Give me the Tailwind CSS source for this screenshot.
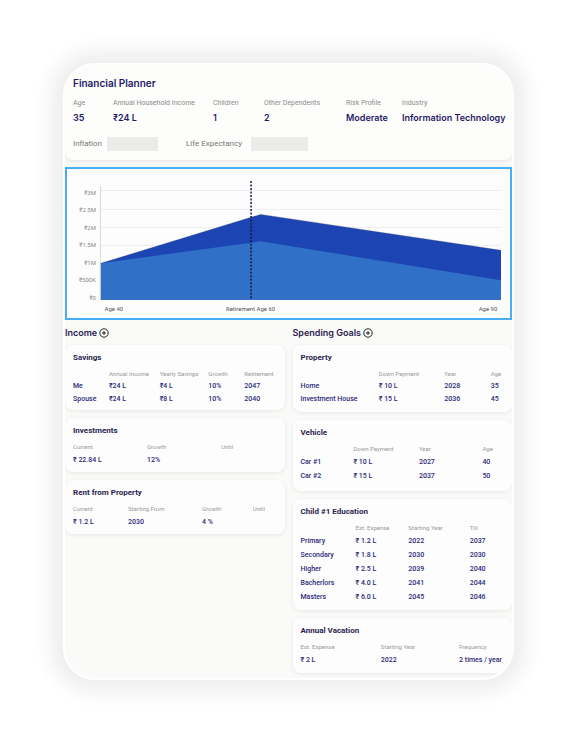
<!DOCTYPE html>
<html lang="en">
<head>
<meta charset="utf-8">
<meta name="viewport" content="width=device-width, initial-scale=1">
<title>Financial Planner</title>
<script src="https://cdn.jsdelivr.net/npm/@tailwindcss/browser@4"></script>
</head>
<body class="bg-white p-[63px] font-[Roboto,'Noto_Sans',sans-serif] text-[#2c2a78]">
<main class="overflow-hidden rounded-[32px] border-2 border-white bg-[#fafaf8] pb-[5px] shadow-[0_0_20px_12px_rgba(0,0,0,0.07)]">

  <header class="rounded-b-lg bg-[#fdfdfc] px-2 pt-[11px] pb-[9px] shadow-[0_1px_4px_rgba(0,0,0,0.1)]">
    <h1 class="font-[Inter,sans-serif] text-[10px] leading-[14px] font-semibold text-[#1f1a66]">Financial Planner</h1>
    <dl class="mt-[6px] grid grid-cols-[40fr_100fr_51fr_82fr_56fr_102fr] font-[Inter,'Noto_Sans',sans-serif] text-[9px] leading-[16px] font-semibold whitespace-nowrap text-[#1f1a66] [&_dt]:font-[Roboto,sans-serif] [&_dt]:text-[7px] [&_dt]:leading-[14px] [&_dt]:font-normal [&_dt]:text-[#8c8c8c] [&>div]:min-w-0">
      <div><dt>Age</dt><dd>35</dd></div>
      <div><dt>Annual Household Income</dt><dd>₹24 L</dd></div>
      <div><dt>Children</dt><dd>1</dd></div>
      <div><dt>Other Dependents</dt><dd>2</dd></div>
      <div><dt>Risk Profile</dt><dd>Moderate</dd></div>
      <div><dt>Industry</dt><dd>Information Technology</dd></div>
    </dl>
    <form class="mt-[11px] flex items-center text-[8px] leading-[14px] text-[#777]">
      <label for="inflation" class="w-[34px]">Inflation</label>
      <input id="inflation" type="text" class="h-[14px] w-[51px] bg-[#ebebea] px-1">
      <label for="life" class="ml-7 w-[65px]">Life Expectancy</label>
      <input id="life" type="text" class="h-[14px] w-[57px] bg-[#ebebea] px-1">
    </form>
  </header>

  <section class="mt-[7px] border-2 border-[#47aef8] bg-[#fdfdfd]" aria-label="Wealth projection">
    <svg viewBox="0 0 444 149" class="block w-full" font-size="6" fill="#888">
      <g stroke="#ececec" stroke-width="1">
        <path d="M34 21.5H435M34 40.5H435M34 58.5H435M34 76.5H435"/>
        <path d="M33.5 17V131" stroke="#d8d8d8"/>
      </g>
      <path d="M34 94.500L194 45.500L435 81.500V131H34Z" fill="#1c45b3"/>
      <path d="M34 94.500L194 72.500L435 111.500V131H34Z" fill="#3070c7"/>
      <path d="M34 94.500L194 45.500L435 81.500" fill="none" stroke="#2b3a6b" stroke-opacity=".5" stroke-width=".6"/>
      <path d="M184.500 12V131" stroke="#17173a" stroke-width="1.500" stroke-dasharray="2 1.500"/>
      <g text-anchor="end">
        <text x="29" y="26">₹3M</text>
        <text x="29" y="43">₹2.5M</text>
        <text x="29" y="61">₹2M</text>
        <text x="29" y="78">₹1.5M</text>
        <text x="29" y="96">₹1M</text>
        <text x="29" y="113">₹500K</text>
        <text x="29" y="131">₹0</text>
      </g>
      <g fill="#555" text-anchor="middle">
        <text x="47" y="142">Age 40</text>
        <text x="184" y="142">Retirement Age 60</text>
        <text x="422" y="142">Age 90</text>
      </g>
    </svg>
  </section>

  <div class="mt-[5px] grid grid-cols-2 items-start gap-2 [&_article]:rounded-lg [&_article]:bg-[#fdfdfd] [&_article]:pt-[7px] [&_article]:pl-2 [&_article]:shadow-[0_1px_4px_rgba(0,0,0,0.08)] [&_h3]:mb-[3px] [&_h3]:text-[8px] [&_h3]:leading-[12px] [&_h3]:font-bold [&_h3]:text-[#2a2350] [&_table]:w-full [&_table]:table-fixed [&_table]:text-left [&_table]:text-[7px] [&_table]:whitespace-nowrap [&_tbody]:font-medium [&_th]:p-0 [&_td]:p-0 [&_tbody_th]:font-medium [&_thead]:text-[6px] [&_thead]:leading-[13px] [&_thead]:text-[#999] [&_thead_th]:font-normal">

    <section class="flex flex-col gap-2">
      <div class="-mb-1 flex h-[16px] items-center gap-[2px]">
        <h2 class="font-[Inter,sans-serif] text-[9px] leading-[12px] font-semibold text-[#2a2350]">Income</h2>
        <button type="button" aria-label="Add income" class="size-[10px]">
          <svg viewBox="0 0 10 10" class="block size-full" fill="none" stroke="#222"><circle cx="5" cy="5" r="4.200"/><path d="M5 3V7M3 5H7"/></svg>
        </button>
      </div>

      <article class="pb-1">
        <h3>Savings</h3>
        <table class="leading-[13px]">
          <colgroup><col class="w-[17%]"><col class="w-[24%]"><col class="w-[23%]"><col class="w-[17%]"><col class="w-[19%]"></colgroup>
          <thead><tr><th></th><th>Annual Income</th><th>Yearly Savings</th><th>Growth</th><th>Retirement</th></tr></thead>
          <tbody>
            <tr><th>Me</th><td>₹24 L</td><td>₹4 L</td><td>10%</td><td>2047</td></tr>
            <tr><th>Spouse</th><td>₹24 L</td><td>₹8 L</td><td>10%</td><td>2040</td></tr>
          </tbody>
        </table>
      </article>

      <article class="pb-[5px]">
        <h3>Investments</h3>
        <table class="leading-[14px]">
          <colgroup><col class="w-[35%]"><col class="w-[35%]"><col class="w-[30%]"></colgroup>
          <thead><tr><th>Current</th><th>Growth</th><th>Until</th></tr></thead>
          <tbody><tr><td>₹ 22.84 L</td><td>12%</td><td></td></tr></tbody>
        </table>
      </article>

      <article class="pb-[5px]">
        <h3>Rent from Property</h3>
        <table class="leading-[14px]">
          <colgroup><col class="w-[26%]"><col class="w-[35%]"><col class="w-[24%]"><col class="w-[15%]"></colgroup>
          <thead><tr><th>Current</th><th>Starting From</th><th>Growth</th><th>Until</th></tr></thead>
          <tbody><tr><td>₹ 1.2 L</td><td>2030</td><td>4 %</td><td></td></tr></tbody>
        </table>
      </article>
    </section>

    <section class="flex flex-col gap-2">
      <div class="-mb-1 flex h-[16px] items-center gap-[2px]">
        <h2 class="font-[Inter,sans-serif] text-[9px] leading-[12px] font-semibold text-[#2a2350]">Spending Goals</h2>
        <button type="button" aria-label="Add spending goal" class="size-[10px]">
          <svg viewBox="0 0 10 10" class="block size-full" fill="none" stroke="#222"><circle cx="5" cy="5" r="4.200"/><path d="M5 3V7M3 5H7"/></svg>
        </button>
      </div>

      <article class="pb-[6px]">
        <h3>Property</h3>
        <table class="leading-[13px]">
          <colgroup><col class="w-[37%]"><col class="w-[31%]"><col class="w-[22%]"><col class="w-[10%]"></colgroup>
          <thead><tr><th></th><th>Down Payment</th><th>Year</th><th>Age</th></tr></thead>
          <tbody>
            <tr><th>Home</th><td>₹ 10 L</td><td>2028</td><td>35</td></tr>
            <tr><th>Investment House</th><td>₹ 15 L</td><td>2036</td><td>45</td></tr>
          </tbody>
        </table>
      </article>

      <article class="pb-2">
        <h3>Vehicle</h3>
        <table class="leading-[14px]">
          <colgroup><col class="w-[25%]"><col class="w-[31%]"><col class="w-[30%]"><col class="w-[14%]"></colgroup>
          <thead><tr><th></th><th>Down Payment</th><th>Year</th><th>Age</th></tr></thead>
          <tbody>
            <tr><th>Car #1</th><td>₹ 10 L</td><td>2027</td><td>40</td></tr>
            <tr><th>Car #2</th><td>₹ 15 L</td><td>2037</td><td>50</td></tr>
          </tbody>
        </table>
      </article>

      <article class="pb-[6px]">
        <h3>Child #1 Education</h3>
        <table class="leading-[14px]">
          <colgroup><col class="w-[26%]"><col class="w-[25%]"><col class="w-[29%]"><col class="w-[20%]"></colgroup>
          <thead><tr><th></th><th>Est. Expense</th><th>Starting Year</th><th>Till</th></tr></thead>
          <tbody>
            <tr><th>Primary</th><td>₹ 1.2 L</td><td>2022</td><td>2037</td></tr>
            <tr><th>Secondary</th><td>₹ 1.8 L</td><td>2030</td><td>2030</td></tr>
            <tr><th>Higher</th><td>₹ 2.5 L</td><td>2039</td><td>2040</td></tr>
            <tr><th>Bacherlors</th><td>₹ 4.0 L</td><td>2041</td><td>2044</td></tr>
            <tr><th>Masters</th><td>₹ 6.0 L</td><td>2045</td><td>2046</td></tr>
          </tbody>
        </table>
      </article>

      <article class="pb-[6px]">
        <h3>Annual Vacation</h3>
        <table class="leading-[14px]">
          <colgroup><col class="w-[38%]"><col class="w-[37%]"><col class="w-[25%]"></colgroup>
          <thead><tr><th>Est. Expense</th><th>Starting Year</th><th>Frequency</th></tr></thead>
          <tbody><tr><td>₹ 2 L</td><td>2022</td><td>2 times / year</td></tr></tbody>
        </table>
      </article>
    </section>
  </div>
</main>
</body>
</html>
